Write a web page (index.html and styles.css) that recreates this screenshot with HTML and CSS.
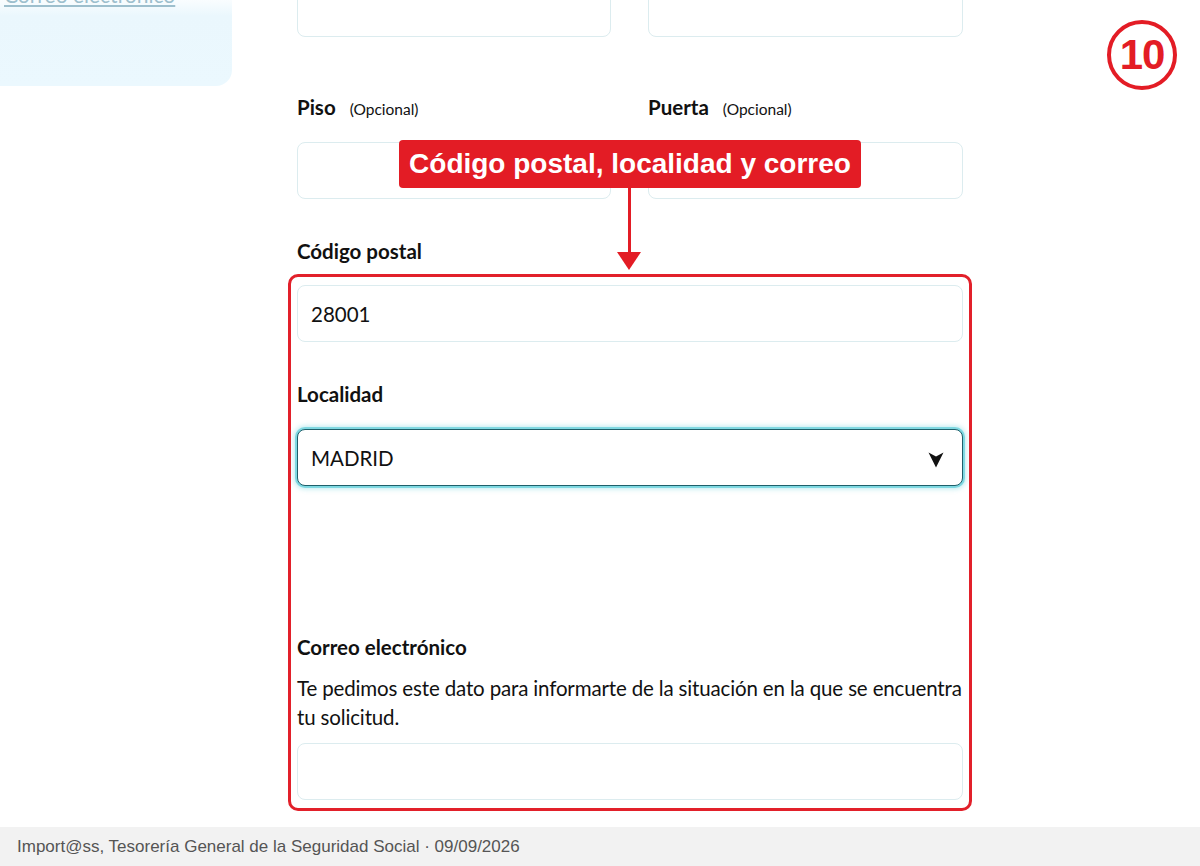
FILE: index.html
```html
<!DOCTYPE html>
<html lang="es">
<head>
<meta charset="utf-8">
<title>Import@ss</title>
<link rel="stylesheet" href="styles.css">
</head>
<body>
<div class="page">
  <div class="layout">
    <aside class="sidebar">
      <a class="side-link" href="#">Correo electrónico</a>
    </aside>
    <main class="main">
      <div class="row">
        <div class="field"><div class="input"></div></div>
        <div class="field"><div class="input"></div></div>
      </div>
      <div class="row row-labels">
        <div class="field">
          <div class="label">Piso <span class="opt">(Opcional)</span></div>
          <div class="input"></div>
        </div>
        <div class="field">
          <div class="label">Puerta <span class="opt">(Opcional)</span></div>
          <div class="input"></div>
        </div>
      </div>
      <div class="label label-cp">Código postal</div>
      <div class="highlight">
        <div class="input"><span class="value">28001</span></div>
        <div class="label label-loc">Localidad</div>
        <div class="input select">
          <span class="value">MADRID</span>
          <svg class="chev" width="16" height="18" viewBox="0 0 16 18"><path d="M0.5 2.5 L8 6.5 L15.5 2.5 L8 17.5 Z" fill="#111"/></svg>
        </div>
        <div class="label label-mail">Correo electrónico</div>
        <p class="desc">Te pedimos este dato para informarte de la situación en la que se encuentra tu solicitud.</p>
        <div class="input"></div>
      </div>
    </main>
  </div>
  <div class="callout">Código postal, localidad y correo</div>
  <div class="arrow"><div class="arrow-line"></div><div class="arrow-head"></div></div>
  <div class="step">10</div>
  <footer class="footer">Import@ss, Tesorería General de la Seguridad Social · 09/09/2026</footer>
</div>
</body>
</html>
```

FILE: styles.css
```css
* { box-sizing: border-box; }
html, body { margin: 0; padding: 0; }
body {
  background: #fff;
  font-family: Lato, "Liberation Sans", sans-serif;
  color: #111;
}
.page {
  position: relative;
  width: 1200px;
  height: 866px;
  overflow: hidden;
  display: flex;
  flex-direction: column;
}
.layout {
  flex: 1;
  display: flex;
  align-items: flex-start;
}
.sidebar {
  width: 232px;
  height: 106px;
  margin-top: -20px;
  background: linear-gradient(#ffffff 0px, #ffffff 14px, #eaf7fd 36px, #ebf8fe 100%);
  border-radius: 0 16px 16px 0;
  padding: 0 0 0 4px;
}
.side-link {
  display: block;
  font-size: 21px;
  line-height: 24px;
  margin-top: 3px;
  color: #9dbfcd;
  text-decoration: underline;
}
.main {
  width: 666px;
  margin-left: 65px;
  margin-top: -20px;
}
.row {
  display: flex;
  gap: 37px;
}
.row .field { width: 314px; }
.row .field:last-child { width: 315px; }
.input {
  height: 57px;
  border: 1.5px solid #dcecef;
  border-radius: 8px;
  background: #fff;
  display: flex;
  align-items: center;
  padding: 0 13px;
}
.value {
  font-size: 20.5px;
  color: #111;
}
.label {
  font-weight: 700;
  font-size: 20.5px;
  line-height: 24px;
}
.opt {
  font-weight: 400;
  font-size: 15.5px;
  margin-left: 9px;
}
.row-labels { margin-top: 58px; }
.row-labels .label { margin-bottom: 21px; }
.label-cp { margin-top: 40px; }
.highlight {
  margin: 11px -9px 0;
  border: 3px solid #e2202a;
  border-radius: 10px;
  padding: 8px 6px 8px;
}
.label-loc { margin-top: 40px; margin-bottom: 23px; }
.select {
  border: 1.5px solid #1f5f6a;
  box-shadow: 0 0 0 2px rgba(64, 196, 210, 0.55), 0 0 5px 3px rgba(64, 196, 210, 0.35);
  justify-content: space-between;
  padding-right: 18px;
}
.chev { display: block; margin-top: 2px; }
.label-mail { margin-top: 149px; }
.desc {
  margin: 15px 0 11px;
  font-size: 20.5px;
  line-height: 29px;
  letter-spacing: -0.15px;
}
.callout {
  position: absolute;
  left: 399px;
  top: 140px;
  width: 462px;
  height: 48px;
  background: #e31c25;
  color: #fff;
  border-radius: 4px;
  font-family: "Liberation Sans", Arial, sans-serif;
  font-weight: 700;
  font-size: 28px;
  display: flex;
  align-items: center;
  justify-content: center;
}
.arrow {
  position: absolute;
  left: 616px;
  top: 188px;
  width: 26px;
  display: flex;
  flex-direction: column;
  align-items: center;
}
.arrow-line {
  width: 3px;
  height: 64px;
  background: #e31c25;
}
.arrow-head {
  width: 0;
  height: 0;
  border-left: 12px solid transparent;
  border-right: 12px solid transparent;
  border-top: 18px solid #e31c25;
}
.step {
  position: absolute;
  left: 1107px;
  top: 20px;
  width: 70px;
  height: 70px;
  border: 4.5px solid #e31c25;
  border-radius: 50%;
  color: #e31c25;
  font-family: "Liberation Sans", Arial, sans-serif;
  font-weight: 700;
  font-size: 42px;
  letter-spacing: -1px;
  display: flex;
  align-items: center;
  justify-content: center;
}
.footer {
  height: 39px;
  background: #f2f2f2;
  color: #555;
  font-family: "Liberation Sans", Arial, sans-serif;
  font-size: 17px;
  line-height: 39px;
  padding-left: 17px;
}
```
